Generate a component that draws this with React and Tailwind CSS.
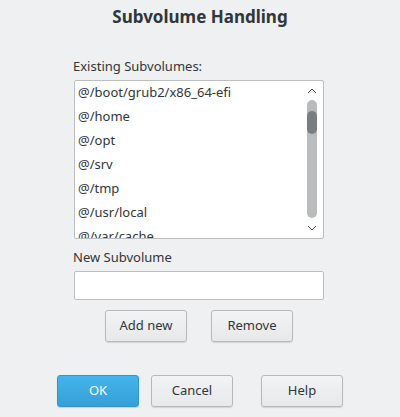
import React from 'react';

const subvolumes = [
    '@/boot/grub2/x86_64-efi',
    '@/home',
    '@/opt',
    '@/srv',
    '@/tmp',
    '@/usr/local',
    '@/var/cache',
    '@/var/crash',
];

const Button = ({ children, primary }) => (
    <button
        className={
            primary
                ? 'w-[82px] h-[32px] rounded-[3px] border border-[#2f97cf] bg-gradient-to-b from-[#44b4ee] to-[#369fd6] text-white text-[13px] shadow-[0_1px_1px_rgba(0,0,0,0.15)]'
                : 'w-[82px] h-[32px] rounded-[3px] border border-[#b7b9ba] bg-gradient-to-b from-[#f2f3f4] to-[#e7e8e9] text-[#31363b] text-[13px] shadow-[0_1px_1px_rgba(0,0,0,0.12)]'
        }
    >
        {children}
    </button>
);

export default function App() {
    return (
        <div className="w-[400px] h-[417px] bg-[#eff0f1] text-[#31363b] font-['Noto_Sans',sans-serif] flex flex-col">
            <h1 className="mt-[5px] h-[24px] text-center text-[17px] font-bold leading-[24px]">Subvolume Handling</h1>

            <div className="mt-[28px] ml-[74px] w-[250px] flex flex-col">
                <div className="text-[13px] leading-[18px] -ml-[1px]">Existing Subvolumes:</div>

                <div className="mt-[5px] h-[159px] rounded-[2px] border border-[#bcbebf] bg-white flex overflow-hidden">
                    <ul className="flex-1 pl-[3px] -mt-[1px] overflow-hidden">
                        {subvolumes.map(s => (
                            <li key={s} className="h-[24px] leading-[24px] text-[13px]">{s}</li>
                        ))}
                    </ul>
                    <div className="w-[18px] flex flex-col items-center pr-[4px]">
                        <svg width="10" height="6" viewBox="0 0 10 6" className="mt-[7px]">
                            <path d="M1 5 L5 1 L9 5" fill="none" stroke="#4d5257" strokeWidth="1" />
                        </svg>
                        <div className="mt-[6px] w-[10px] h-[118px] rounded-full bg-[#b9bbbc] relative">
                            <div className="absolute left-0 top-[11px] w-[10px] h-[23px] rounded-full bg-[#7a7d80]" />
                        </div>
                        <svg width="10" height="6" viewBox="0 0 10 6" className="mt-[7px]">
                            <path d="M1 1 L5 5 L9 1" fill="none" stroke="#4d5257" strokeWidth="1" />
                        </svg>
                    </div>
                </div>

                <div className="mt-[9px] text-[13px] leading-[18px] -ml-[1px]">New Subvolume</div>
                <input
                    type="text"
                    className="mt-[5px] h-[29px] rounded-[2px] border border-[#bcbebf] bg-white outline-none px-2 text-[13px]"
                />

                <div className="mt-[10px] flex justify-center gap-[24px]">
                    <Button>Add new</Button>
                    <Button>Remove</Button>
                </div>
            </div>

            <div className="mt-[33px] ml-[57px] flex">
                <Button primary>OK</Button>
                <div className="ml-[12px]"><Button>Cancel</Button></div>
                <div className="ml-[28px]"><Button>Help</Button></div>
            </div>
        </div>
    );
}
